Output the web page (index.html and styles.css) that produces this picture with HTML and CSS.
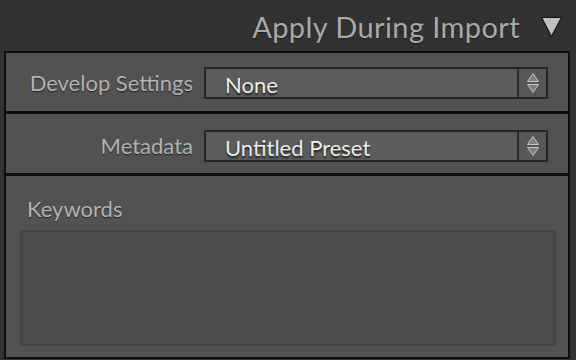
FILE: index.html
```html
<!DOCTYPE html>
<html>
<head>
<meta charset="utf-8">
<link rel="stylesheet" href="styles.css">
</head>
<body>
<div class="header">
  <span class="title">Apply During Import</span>
  <svg class="disclosure" width="23" height="22" viewBox="0 0 23 22"><polygon points="1.5,1.5 21.5,1.5 11.5,20.5" fill="#bfbfbf" stroke="#141414" stroke-width="1.2" stroke-linejoin="round"/></svg>
</div>
<div class="panel">
  <div class="row row-first">
    <span class="label">Develop Settings</span>
    <div class="select">
      <span class="value">None</span>
      <span class="arrows"><svg width="26" height="30" viewBox="0 0 26 30"><polygon points="7.5,13.5 13,5.5 18.5,13.5" fill="#808080" stroke="#c4c4c4" stroke-width="1"/><polygon points="7.5,16.5 13,24.5 18.5,16.5" fill="#808080" stroke="#c4c4c4" stroke-width="1"/></svg></span>
    </div>
  </div>
  <div class="row row-second">
    <span class="label">Metadata</span>
    <div class="select">
      <span class="value">Untitled Preset</span>
      <span class="arrows"><svg width="26" height="30" viewBox="0 0 26 30"><polygon points="7.5,13.5 13,5.5 18.5,13.5" fill="#808080" stroke="#c4c4c4" stroke-width="1"/><polygon points="7.5,16.5 13,24.5 18.5,16.5" fill="#808080" stroke="#c4c4c4" stroke-width="1"/></svg></span>
    </div>
  </div>
  <div class="keywords">
    <div class="kw-label">Keywords</div>
    <div class="kw-box"></div>
  </div>
</div>
</body>
</html>
```
FILE: styles.css
```css
html, body {
  margin: 0;
  padding: 0;
  background: #323232;
  width: 576px;
  height: 360px;
  overflow: hidden;
  font-family: Lato, "Open Sans", sans-serif;
}
.header {
  height: 51px;
  display: flex;
  justify-content: flex-end;
  align-items: flex-start;
  padding-right: 13px;
  box-sizing: border-box;
}
.title {
  font-size: 29px;
  letter-spacing: 0.4px;
  color: #a9a9a9;
  line-height: 29px;
  margin-top: 12px;
  text-shadow: 0 1px 1px #1e1e1e;
}
.disclosure {
  margin-left: 20px;
  margin-top: 16px;
}
.panel {
  margin-left: 4px;
  width: 566px;
  box-sizing: border-box;
  border: 2px solid #0e0e0e;
  background: #525252;
}
.row {
  display: flex;
  align-items: flex-start;
  box-sizing: border-box;
}
.row-first {
  height: 58px;
  padding-top: 14px;
}
.row-second {
  height: 62px;
  border-top: 3px solid #0e0e0e;
  padding-top: 16px;
}
.label {
  width: 187px;
  text-align: right;
  font-size: 22px;
  line-height: 32px;
  color: #b3b3b3;
  text-shadow: 0 1px 1px #262626;
  flex: none;
}
.select {
  margin-left: 11px;
  width: 344px;
  height: 32px;
  box-sizing: border-box;
  border: 2px solid #262626;
  background: #5c5c5c;
  display: flex;
  align-items: stretch;
}
.value {
  flex: 1;
  padding-left: 19px;
  font-size: 22px;
  line-height: 30px;
  color: #ebebeb;
  text-shadow: 0 2px 2px #1c1c1c;
  padding-top: 1px;
}
.arrows {
  width: 27px;
  border-left: 2px solid #2b2b2b;
  background: #575757;
  display: flex;
  align-items: center;
  justify-content: center;
}
.keywords {
  border-top: 3px solid #0e0e0e;
  height: 184px;
  box-sizing: border-box;
  padding: 20px 12px 0 14px;
}
.kw-label {
  font-size: 22px;
  line-height: 26px;
  color: #b3b3b3;
  text-shadow: 0 1px 1px #262626;
  padding-left: 7px;
}
.kw-box {
  margin-top: 8px;
  height: 116px;
  box-sizing: border-box;
  border: 2px solid #444444;
  background: #4b4b4b;
}
```
